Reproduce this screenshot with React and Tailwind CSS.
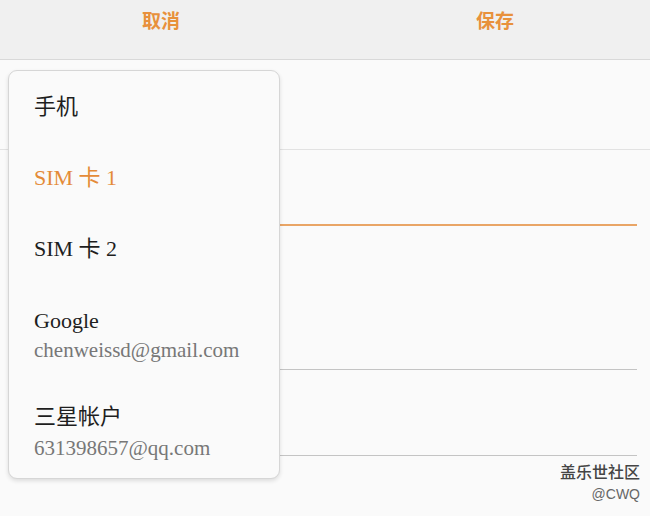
import React from 'react';

const serif = { fontFamily: '"Liberation Serif", "Noto Sans CJK SC", serif' };

function MenuItem({ label, active }) {
  return (
    <div className={`h-[71px] flex items-center px-[25px] text-[22px] ${active ? 'text-[#e48b38]' : 'text-[#1e1e1e]'}`}>
      {label}
    </div>
  );
}

export default function App() {
  return (
    <div className="relative w-[650px] h-[516px] bg-[#fafafa] overflow-hidden" style={serif}>
      {/* header */}
      <div className="h-[60px] bg-[#f0f0f0] border-b border-[#d9d9d9] flex">
        <button className="w-[322px] flex items-center justify-center pb-[18px] text-[19px] font-bold text-[#e8913c] [font-family:'Noto_Sans_CJK_SC',sans-serif]">
          取消
        </button>
        <button className="flex-1 flex items-center justify-center pl-[18px] pb-[18px] text-[19px] font-bold text-[#e8913c] [font-family:'Noto_Sans_CJK_SC',sans-serif]">
          保存
        </button>
      </div>

      {/* form behind */}
      <div className="h-[90px] border-b border-[#e2e2e2]" />
      <div className="mx-[13px] h-[76px] border-b-2 border-[#e9a566]" />
      <div className="mx-[13px] h-[144px] border-b border-[#c4c4c4]" />
      <div className="mx-[13px] h-[86px] border-b border-[#c4c4c4]" />

      {/* watermark */}
      <div className="absolute right-[10px] top-[460px] flex flex-col items-end [font-family:'Noto_Sans_CJK_SC',sans-serif]">
        <span className="text-[16px] leading-[22px] font-medium text-[#454545]">盖乐世社区</span>
        <span className="text-[14px] leading-[22px] text-[#666] mt-[1px] [font-family:'Liberation_Sans',sans-serif]">@CWQ</span>
      </div>

      {/* dropdown */}
      <div className="absolute left-[8px] top-[70px] w-[272px] h-[409px] bg-[#fafafa] rounded-[9px] border border-[#d6d6d6] shadow-[0_2px_4px_rgba(0,0,0,0.12)]">
        <MenuItem label="手机" />
        <MenuItem label="SIM 卡 1" active />
        <MenuItem label="SIM 卡 2" />
        <div className="px-[25px] pt-[24px]">
          <div className="text-[22px] leading-[26px] text-[#1e1e1e]">Google</div>
          <div className="text-[21px] leading-[26px] mt-[3px] text-[#777]">chenweissd@gmail.com</div>
          <div className="text-[22px] leading-[26px] mt-[41px] text-[#1e1e1e]">三星帐户</div>
          <div className="text-[21px] leading-[26px] mt-[5px] text-[#777]">631398657@qq.com</div>
        </div>
      </div>
    </div>
  );
}
